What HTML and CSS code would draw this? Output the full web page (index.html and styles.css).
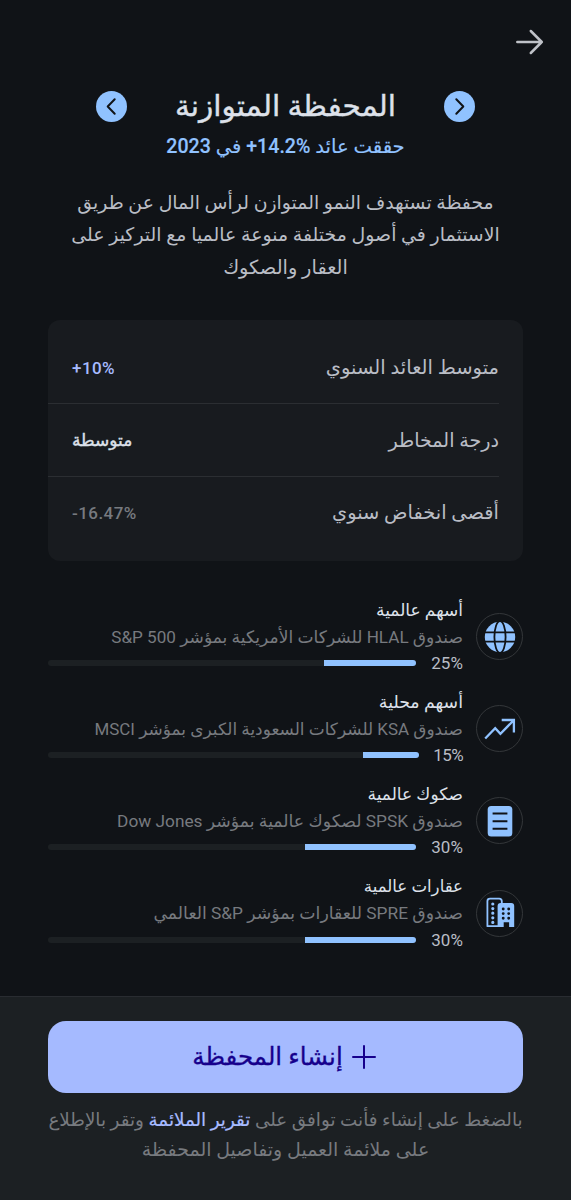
FILE: index.html
```html
<!DOCTYPE html>
<html lang="ar" dir="rtl">
<head>
<meta charset="utf-8">
<meta name="viewport" content="width=device-width, initial-scale=1">
<title>المحفظة المتوازنة</title>
<link rel="stylesheet" href="styles.css">
</head>
<body>
<main class="screen">
  <header class="topbar">
    <svg class="back" viewBox="0 0 28 26"><path d="M1.3 13H25.8M14.8 2l11 11-11 11"/></svg>
  </header>
  <section class="hero">
    <div class="switcher">
      <span class="nav"><svg viewBox="0 0 31 31"><path d="M12.3 8.3l7 7.2-7 7.2"/></svg></span>
      <h1 class="title">المحفظة المتوازنة</h1>
      <span class="nav"><svg viewBox="0 0 31 31"><path d="M18.7 8.3l-7 7.2 7 7.2"/></svg></span>
    </div>
    <p class="yield">حققت عائد <bdi dir="ltr">+14.2%</bdi> في 2023</p>
    <p class="about">
      <span class="line about-1">محفظة تستهدف النمو المتوازن لرأس المال عن طريق</span>
      <span class="line about-2">الاستثمار في أصول مختلفة منوعة عالميا مع التركيز على</span>
      <span class="line about-3">العقار والصكوك</span>
    </p>
  </section>
  <section class="stats">
    <div class="stat"><span class="label label-1">متوسط العائد السنوي</span><b class="value accent" dir="ltr">+10%</b></div>
    <div class="stat"><span class="label label-2">درجة المخاطر</span><b class="value level">متوسطة</b></div>
    <div class="stat"><span class="label label-3">أقصى انخفاض سنوي</span><b class="value muted" dir="ltr">-16.47%</b></div>
  </section>
  <section class="funds">
    <article class="fund">
      <span class="badge"><svg viewBox="0 0 32 32"><circle cx="16" cy="16" r="15.2" fill="#90c2ff"/><g fill="none" stroke="#101317" stroke-width="1.8"><ellipse cx="16" cy="16" rx="5.6" ry="16"/><path d="M0 11.4h32M0 20.6h32"/></g></svg></span>
      <div class="info">
        <h2 class="name name-1">أسهم عالمية</h2>
        <p class="desc desc-1">صندوق HLAL للشركات الأمريكية بمؤشر S&amp;P 500</p>
        <div class="meter"><span class="pct">25%</span><span class="track"><i class="fill" style="width:25%"></i></span></div>
      </div>
    </article>
    <article class="fund">
      <span class="badge"><svg viewBox="0 0 32 32"><path d="M1.2 25.5l10-10.3 5.2 5.6L29.7 7.2M17.7 7h12.2v12.5" fill="none" stroke="#90c2ff" stroke-width="2.3"/></svg></span>
      <div class="info">
        <h2 class="name name-2">أسهم محلية</h2>
        <p class="desc desc-2">صندوق KSA للشركات السعودية الكبرى بمؤشر MSCI</p>
        <div class="meter"><span class="pct pct-short">15%</span><span class="track"><i class="fill" style="width:15%"></i></span></div>
      </div>
    </article>
    <article class="fund">
      <span class="badge"><svg viewBox="0 0 32 32"><rect x="3.7" y="1" width="24.6" height="30.4" rx="3.5" fill="#90c2ff"/><path d="M8.6 8.5h14.8M8.6 16.2h14.8M8.6 23.8h14.8" stroke="#101317" stroke-width="2.1"/></svg></span>
      <div class="info">
        <h2 class="name name-3">صكوك عالمية</h2>
        <p class="desc desc-3">صندوق SPSK لصكوك عالمية بمؤشر Dow Jones</p>
        <div class="meter"><span class="pct">30%</span><span class="track"><i class="fill" style="width:30%"></i></span></div>
      </div>
    </article>
    <article class="fund">
      <span class="badge"><svg viewBox="0 0 32 32"><path d="M3.4 29V4.2q0-2.6 2.6-2.6h9.2q2.6 0 2.6 2.6v2.4M2.6 29.2h12" fill="none" stroke="#90c2ff" stroke-width="1.8"/><path d="M13.6 30V9q0-3 3-3h10.6q3 0 3 3v21h-5.1v-4.8h-5.4V30z" fill="#90c2ff"/><path d="M8.8 7v19" fill="none" stroke="#90c2ff" stroke-width="3.2" stroke-linecap="round" stroke-dasharray="0 4.6"/><path d="M19.2 12v9.6M24.7 12v9.6" fill="none" stroke="#101317" stroke-width="2.9" stroke-linecap="round" stroke-dasharray="0 4.6"/></svg></span>
      <div class="info">
        <h2 class="name name-4">عقارات عالمية</h2>
        <p class="desc desc-4">صندوق SPRE للعقارات بمؤشر S&amp;P العالمي</p>
        <div class="meter"><span class="pct">30%</span><span class="track"><i class="fill" style="width:30%"></i></span></div>
      </div>
    </article>
  </section>
  <footer class="footer">
    <button class="create"><svg viewBox="0 0 24 24"><path d="M12 1v22M1 12h22"/></svg><span>إنشاء المحفظة</span></button>
    <p class="legal">
      <span class="line legal-1">بالضغط على إنشاء فأنت توافق على <a class="link">تقرير الملائمة</a> وتقر بالإطلاع</span>
      <span class="line legal-2">على ملائمة العميل وتفاصيل المحفظة</span>
    </p>
  </footer>
</main>
</body>
</html>
```
FILE: styles.css
```css
* { box-sizing: border-box; }
body { margin: 0; background: #101317; font-family: Roboto, "DejaVu Sans", sans-serif; }
h1, h2, p { margin: 0; font-weight: 400; }
svg { display: block; }
.screen { width: 571px; height: 1200px; display: flex; flex-direction: column; overflow: hidden; color: #b9bdc5; }
.topbar { height: 84px; padding: 29px 27px 0; }
.back { width: 28px; height: 26px; fill: none; stroke: #bfc2c8; stroke-width: 2.5; stroke-linecap: round; stroke-linejoin: round; }
.hero { height: 236px; }
.switcher { height: 44px; padding: 0 96px; display: flex; align-items: center; justify-content: space-between; }
.nav { width: 31px; height: 31px; border-radius: 50%; background: #90c2ff; }
.nav svg { width: 31px; height: 31px; fill: none; stroke: #101317; stroke-width: 2; stroke-linecap: round; stroke-linejoin: round; }
.title { font-size: 29.6px; font-weight: 400; line-height: 44px; color: #dde1ea; white-space: nowrap; -webkit-text-stroke: .4px #dde1ea; }
.yield { height: 36px; line-height: 37px; text-align: center; font-size: 19.6px; font-weight: 500; color: #90c2ff; -webkit-text-stroke: .15px #90c2ff; }
.about { padding-top: 22.6px; }
.line { display: block; text-align: center; white-space: nowrap; }
.about .line { height: 32.5px; line-height: 32.5px; }
.about .about-1 { font-size: 18.85px; }
.about .about-2 { font-size: 18.93px; }
.about .about-3 { font-size: 19.4px; }
.stats { margin: 0 48px; height: 240.5px; padding: 12px 0; border-radius: 12px; background: #181b1f; }
.stat { height: 72.4px; margin-right: 24px; padding-left: 24px; display: flex; justify-content: space-between; align-items: center; border-bottom: 1.5px solid #2b2e32; }
.stat:last-child { border-bottom: 0; }
.label { white-space: nowrap; }
.label-1 { font-size: 19.5px; }
.label-2 { font-size: 19.1px; }
.label-3 { font-size: 19.4px; }
.value { font-size: 17px; font-weight: 500; letter-spacing: .45px; }
.accent { color: #a7bbff; }
.level { color: #dde1ea; letter-spacing: 0; -webkit-text-stroke: .4px #dde1ea; }
.muted { color: #777a7f; }
.funds { padding: 35.5px 48px 0; height: 435.5px; }
.fund { height: 92.2px; display: flex; gap: 13px; }
.badge { width: 47px; height: 47px; margin-top: 17px; flex: none; border: 1px solid #34373a; border-radius: 50%; display: flex; align-items: center; justify-content: center; }
.badge svg { width: 32px; height: 32px; flex: none; }
.info { flex: 1; min-width: 0; }
.name { height: 27.5px; line-height: 28px; color: #dde1ea; white-space: nowrap; }
.name-1 { font-size: 17px; }
.name-2 { font-size: 17.4px; }
.name-3 { font-size: 17px; }
.name-4 { font-size: 16.6px; }
.desc { height: 26.5px; line-height: 26px; color: #777a7f; white-space: nowrap; }
.desc-1 { font-size: 17.1px; }
.desc-2 { font-size: 16.95px; }
.desc-3 { font-size: 17.3px; }
.desc-4 { font-size: 17.3px; }
.meter { height: 26px; display: flex; align-items: center; gap: 15px; }
.pct { width: 32.5px; font-size: 17px; line-height: 26px; letter-spacing: .1px; }
.pct-short { width: 29.5px; letter-spacing: -.6px; }
.track { flex: 1; height: 6px; border-radius: 3px; background: #1c2023; overflow: hidden; }
.fill { display: block; height: 6px; background: #90c2ff; }
.footer { height: 204px; padding: 24px 48px 0; background: #1c2023; border-top: 1.5px solid #292c31; }
.create { width: 100%; height: 71.5px; padding: 0 0 0 3px; border: 0; border-radius: 18px; background: #a5baff; color: #16008c; font-family: inherit; font-size: 24.5px; -webkit-text-stroke: .3px #16008c; display: flex; align-items: center; justify-content: center; gap: 9px; direction: rtl; }
.create svg { width: 24px; height: 24px; margin-right: 3px; fill: none; stroke: #16008c; stroke-width: 2; stroke-linecap: round; }
.create { padding: 0; }
.legal { padding-top: 12px; color: #777a7f; }
.legal .line { height: 30.5px; line-height: 30.5px; margin: 0 -20px; }
.legal .legal-1 { font-size: 18.33px; }
.legal .legal-2 { font-size: 19px; }
.link { color: #a7bbff; -webkit-text-stroke: .2px #a7bbff; }
```
